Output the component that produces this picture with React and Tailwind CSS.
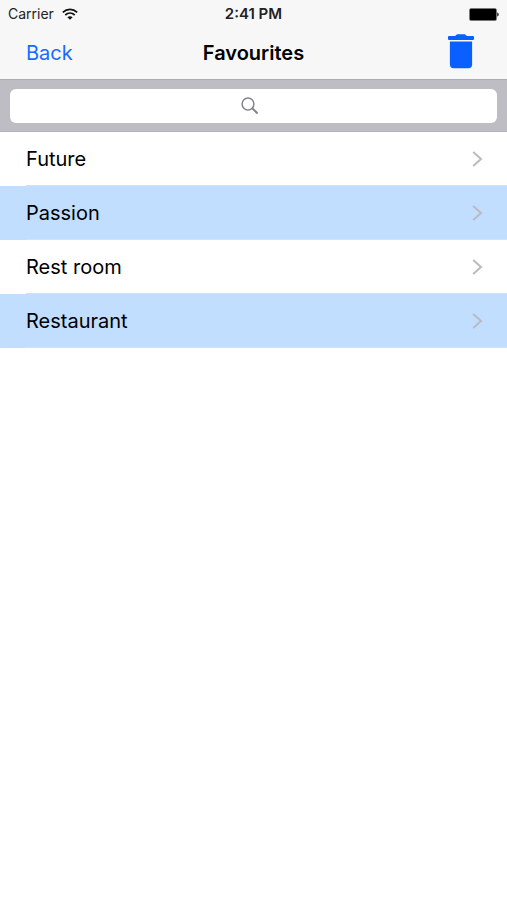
import React, { useState } from "react";

const favourites = ["Future", "Passion", "Rest room", "Restaurant"];

const WifiIcon = () => (
  <svg width="16" height="12" viewBox="0 0 16 12" fill="none" stroke="#111" strokeWidth="1.7">
    <path d="M0.8 4.3C5 0.4 11 0.4 15.2 4.3" />
    <path d="M3.3 7C6.1 4.5 9.9 4.5 12.7 7" />
    <path d="M8 11.8L5.4 9.2C7 7.8 9 7.8 10.6 9.2Z" fill="#111" stroke="none" />
  </svg>
);

const BatteryIcon = () => (
  <svg width="30" height="13" viewBox="0 0 30 13">
    <rect x="0.5" y="0.5" width="27" height="12" rx="1.5" fill="#000" stroke="#777" strokeWidth="0.6" />
    <path d="M28.2 4.5C30.2 5 30.2 8 28.2 8.5Z" fill="#222" />
  </svg>
);

const TrashIcon = () => (
  <svg width="28" height="35" viewBox="0 0 28 35" fill="#0a60ff">
    <path d="M2 2H7.5Q8.5 2 9 1.2Q9.6 0.3 10.8 0.3H17.2Q18.4 0.3 19 1.2Q19.5 2 20.5 2H26Q27 2 27 3V5Q27 6 26 6H2Q1 6 1 5V3Q1 2 2 2Z" />
    <path d="M2.9 7.5H25.1V30.5Q25.1 34.2 21.4 34.2H6.6Q2.9 34.2 2.9 30.5Z" />
  </svg>
);

const SearchIcon = () => (
  <svg width="18" height="18" viewBox="0 0 18 18" fill="none" stroke="#858589">
    <circle cx="7" cy="7" r="5.9" strokeWidth="1.5" />
    <path d="M11.2 11.2L16.6 16.4" strokeWidth="2.1" />
  </svg>
);

const ChevronIcon = () => (
  <svg width="11" height="16" viewBox="0 0 11 16" fill="none" stroke="#b9bbc0" strokeWidth="2">
    <path d="M1.2 1L9 8L1.2 15" />
  </svg>
);

const Favourites = () => {
  const [search, setSearch] = useState("");

  return (
    <div className="min-h-screen bg-white text-black font-['Inter',sans-serif]">
      <header className="bg-[#f7f7f7] border-b border-[#acacb0]">
        {/* Status bar */}
        <div className="grid grid-cols-3 items-center h-7 px-2 text-sm text-[#222]">
          <div className="flex items-center gap-2">
            <span>Carrier</span>
            <WifiIcon />
          </div>
          <span className="text-center text-[15px] font-semibold">2:41 PM</span>
          <div className="flex justify-end">
            <BatteryIcon />
          </div>
        </div>

        {/* Navigation bar */}
        <div className="grid grid-cols-3 items-start h-[51px] px-[26px] text-xl">
          <a href="#back" className="text-[#1769ff] py-[11px]">
            Back
          </a>
          <h1 className="text-center font-semibold py-[11px]">Favourites</h1>
          <button type="button" aria-label="Delete favourites" className="justify-self-end px-1.5 py-1.5">
            <TrashIcon />
          </button>
        </div>
      </header>

      {/* Search */}
      <div className="bg-[#bdbdc3] border-b border-[#b2b2b7] px-[10px] pt-[9px] pb-2">
        <label className="relative block">
          <input
            type="search"
            aria-label="Search favourites"
            value={search}
            onChange={(e) => setSearch(e.target.value)}
            className="block w-full h-[34px] rounded-md bg-white px-3 text-base outline-none"
          />
          {!search && (
            <span className="absolute inset-0 flex items-center justify-center pr-2 pointer-events-none">
              <SearchIcon />
            </span>
          )}
        </label>
      </div>

      <ul>
        {favourites
          .filter((name) => name.toLowerCase().includes(search.toLowerCase()))
          .map((name) => (
            <li key={name} className="even:bg-[#c1ddff] pl-[26px]">
              <a
                href="#favourite"
                className="flex items-center justify-between h-[54px] border-b border-[#d3e1f4] pr-6 text-xl"
              >
                <span>{name}</span>
                <ChevronIcon />
              </a>
            </li>
          ))}
      </ul>
    </div>
  );
};

export default Favourites;
